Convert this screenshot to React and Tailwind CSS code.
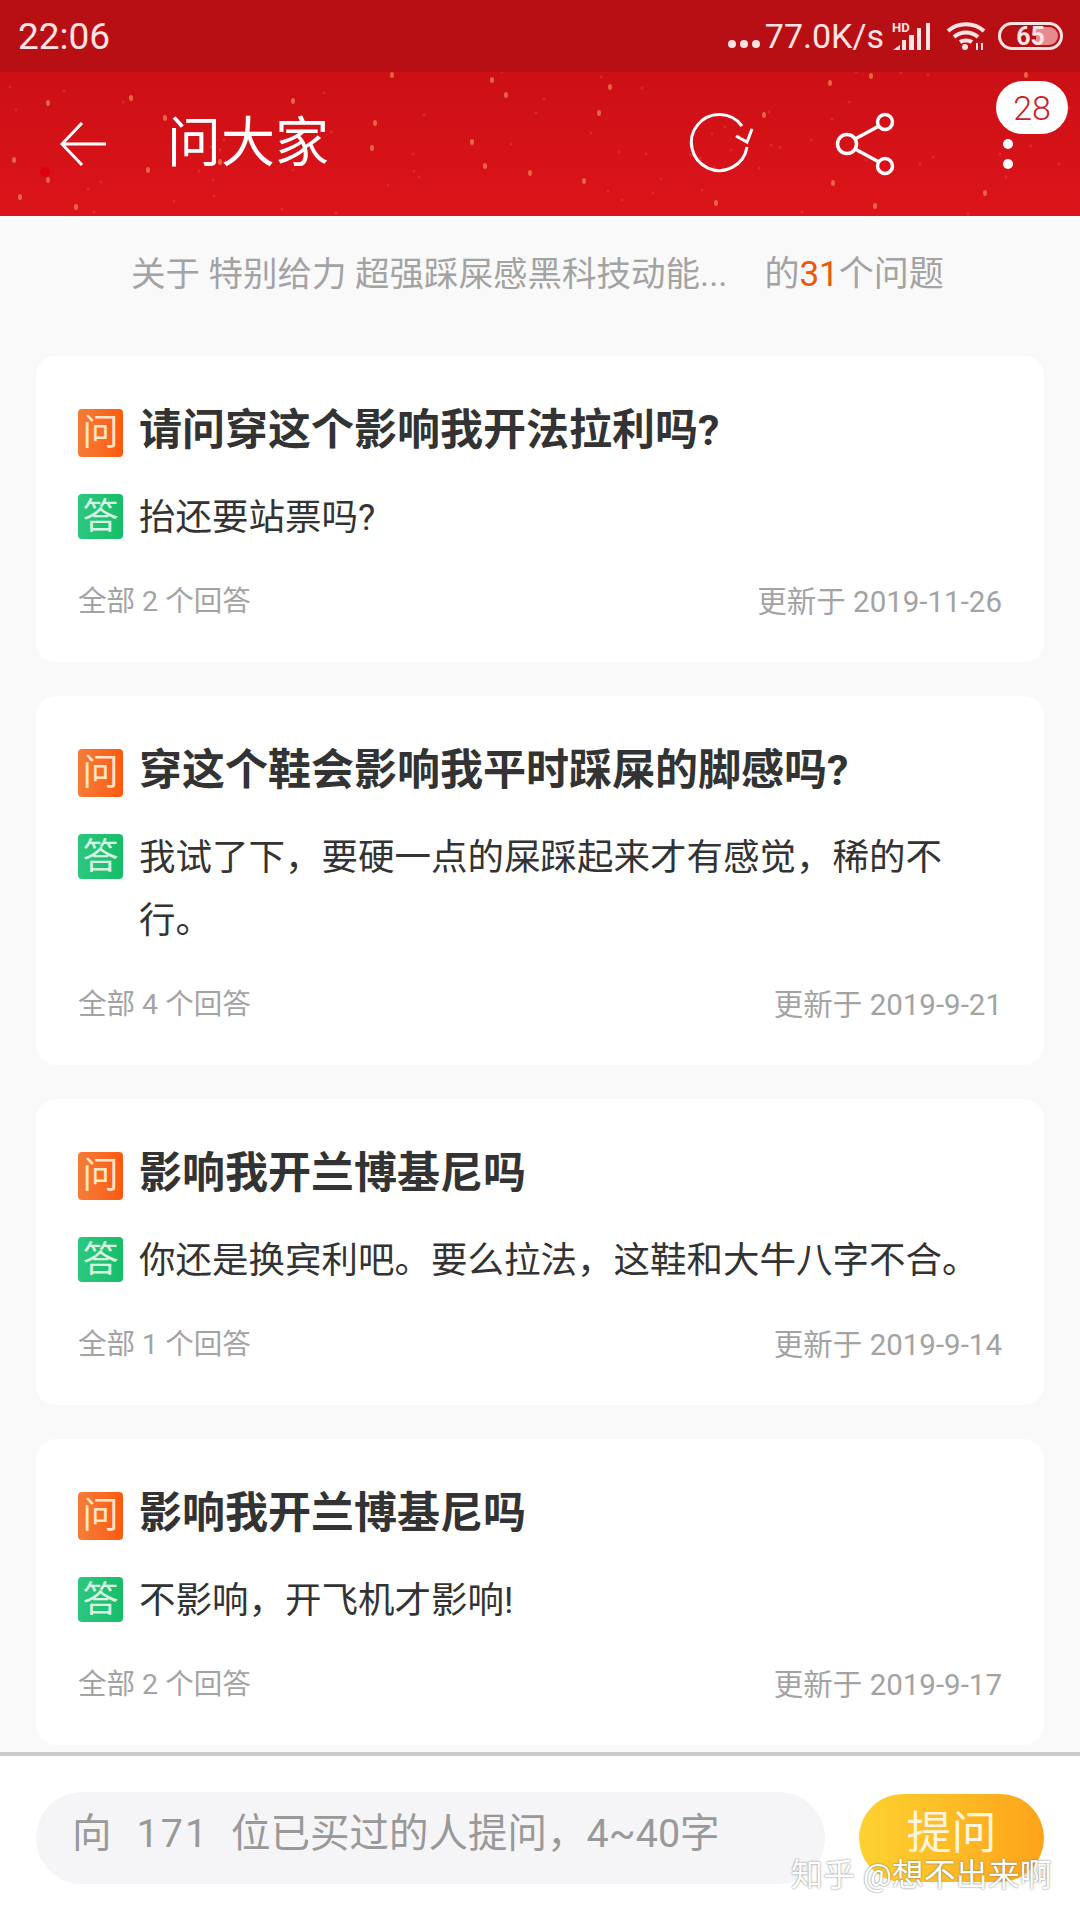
import { useMemo } from "react";

const QUESTIONS = [
    { title: "请问穿这个影响我开法拉利吗?", answer: "抬还要站票吗?", count: "全部 2 个回答", date: "更新于 2019-11-26" },
    { title: "穿这个鞋会影响我平时踩屎的脚感吗?", answer: "我试了下，要硬一点的屎踩起来才有感觉，稀的不行。", count: "全部 4 个回答", date: "更新于 2019-9-21" },
    { title: "影响我开兰博基尼吗", answer: "你还是换宾利吧。要么拉法，这鞋和大牛八字不合。", count: "全部 1 个回答", date: "更新于 2019-9-14" },
    { title: "影响我开兰博基尼吗", answer: "不影响，开飞机才影响!", count: "全部 2 个回答", date: "更新于 2019-9-17" },
];

// Gold flecks on the header, top left of the header is 0,0
const BRIGHT = [
    [392, 3], [492, 8], [506, 23], [830, 11], [1026, 3], [599, 41], [764, 43], [375, 51], [485, 94], [584, 109],
    [833, 111], [875, 134], [48, 31], [131, 26], [293, 29], [165, 46], [48, 108], [148, 98], [220, 90], [530, 101],
    [472, 70], [610, 15], [716, 131], [985, 121], [14, 88], [871, 4], [20, 125], [76, 135], [372, 76],
];

function Flecks() {
    const faint = useMemo(() => {
        const dots = [];
        let seed = 17;
        for (let i = 0; i < 70; i++) {
            seed = (seed * 137 + 71) % 1009;
            const x = (seed * 13) % 1080;
            seed = (seed * 137 + 71) % 1009;
            dots.push([x, seed % 144]);
        }
        return dots;
    }, []);

    return (
        <svg className="absolute inset-0" width="1080" height="144">
            {faint.map(([x, y], i) => <circle key={i} cx={x} cy={y} r="1.5" fill="#e8503a" opacity="0.4" />)}
            {BRIGHT.map(([x, y], i) => <ellipse key={i} cx={x} cy={y} rx="2" ry="3" fill="#ec8a58" opacity="0.7" />)}
            <circle cx="45" cy="100" r="5" fill="#e00012" />
        </svg>
    );
}

function StatusIcons() {
    return (
        <div className="flex items-center">
            <svg width="34" height="12" className="mt-[16px]" fill="#fde3e3">
                <circle cx="5" cy="6" r="4" />
                <circle cx="17" cy="6" r="4" />
                <circle cx="29" cy="6" r="4" />
            </svg>
            <span className="ml-[4px] text-[34px] leading-none text-[#fde3e3]">77.0K/s</span>
            <svg width="40" height="28" className="ml-[8px] overflow-visible" fill="#fde3e3">
                <text x="0" y="10" fontSize="13" fontWeight="700" fontFamily="Roboto, sans-serif">HD</text>
                <path d="M1 28l7-5v5zM10 18h4v10h-4zM17 13h5v15h-5zM25 6h4v22h-4zM34 1h4v27h-4z" />
            </svg>
            <svg width="40" height="30" viewBox="0 0 40 30" className="ml-[14px]" fill="none" stroke="#fde3e3" strokeWidth="4">
                <path d="M2 10c10-9 26-9 36 0" />
                <path d="M8 16c7-6 17-6 24 0" />
                <path d="M14 21c3-2 9-2 12 0" />
                <circle cx="19" cy="26" r="3" fill="#fde3e3" stroke="none" />
                <path d="M31 22v7M36 22v7" strokeWidth="2" />
            </svg>
            <div className="relative ml-[12px] flex h-[28px] w-[65px] items-center justify-center overflow-hidden rounded-full border-[3px] border-[#fde3e3]">
                <div className="absolute inset-y-[2px] right-[2px] w-[22px] rounded-r-full bg-[#e58a8d]" />
                <span className="relative text-[25px] font-bold leading-none text-[#fde3e3]">65</span>
            </div>
        </div>
    );
}

function Tag({ text, className }) {
    return (
        <div className={`flex w-[45px] shrink-0 items-center justify-center rounded-[4px] text-[36px] leading-none ${className}`}>
            {text}
        </div>
    );
}

function QuestionCard({ question }) {
    return (
        <div className="mx-[36px] mb-[34px] rounded-[20px] bg-white pb-[40px] pl-[42px] pr-[42px] pt-[50px]">
            <div className="flex h-[48px] items-start">
                <Tag text="问" className="mt-[3px] h-[48px] bg-linear-to-r from-[#f47c38] to-[#fe590a] text-[#ffe6c8]" />
                <h2 className="ml-[16px] text-[43px] font-bold leading-[48px] text-[#333333]">{question.title}</h2>
            </div>
            <div className="mt-[32px] flex items-start">
                <Tag text="答" className="mt-[8px] h-[45px] bg-linear-to-r from-[#2bc77f] to-[#16bd68] text-[#d8f5e3]" />
                <p className="ml-[16px] text-[36.5px] leading-[63px] text-[#333333]">{question.answer}</p>
            </div>
            <div className="mt-[33px] flex h-[40px] items-center justify-between text-[#a3a3a3]">
                <span className="text-[28.5px]">{question.count}</span>
                <span className="text-[29.5px]">{question.date}</span>
            </div>
        </div>
    );
}

function App() {
    return (
        <div className="flex h-[1920px] w-[1080px] flex-col overflow-hidden bg-[#f9f9f9] font-['Roboto','Noto_Sans_CJK_SC',sans-serif]">
            {/* Status bar */}
            <div className="flex h-[72px] shrink-0 items-center justify-between bg-[#b80f14] pl-[18px] pr-[17px]">
                <span className="text-[37px] leading-none text-[#fde3e3]">22:06</span>
                <StatusIcons />
            </div>

            {/* Header */}
            <div className="relative flex h-[144px] shrink-0 items-center bg-linear-to-b from-[#cc1016] to-[#dc141a] pl-[60px] text-white">
                <Flecks />
                <svg width="46" height="44" viewBox="0 0 46 44" className="relative" fill="none" stroke="white" strokeWidth="3">
                    <path d="M22 1L2 22l20 21M2 22h44" />
                </svg>
                <h1 className="relative ml-[61px] text-[54px] leading-none">问大家</h1>
                <svg width="70" height="70" viewBox="0 0 70 70" className="relative ml-[355px]" fill="none" stroke="white" strokeWidth="3">
                    <path d="M63 38A28 28 0 1 1 58 17" />
                    <path d="M52 27l11 6 5-13" />
                </svg>
                <svg width="64" height="64" viewBox="0 0 64 64" className="relative ml-[80px]" fill="none" stroke="white" strokeWidth="3.5">
                    <circle cx="13" cy="32" r="9.5" />
                    <circle cx="51" cy="10" r="7.5" />
                    <circle cx="51" cy="54" r="7.5" />
                    <path d="M21 27l24-13M21 37l24 13" />
                </svg>
                <div className="absolute left-[996px] top-[9px] flex h-[53px] w-[72px] items-center justify-center rounded-full bg-white text-[34px] font-light leading-none text-[#c8212a]">
                    28
                </div>
                <div className="absolute left-[1003px] top-[67px] flex flex-col gap-[10px]">
                    <div className="h-[10px] w-[10px] rounded-full bg-white" />
                    <div className="h-[10px] w-[10px] rounded-full bg-white" />
                </div>
            </div>

            {/* Question list */}
            <div className="min-h-0 flex-1">
                <div className="flex h-[118px] items-center pl-[131px] text-[34.5px] text-[#a3a3a3]">
                    <span>关于 特别给力 超强踩屎感黑科技动能...</span>
                    <span className="ml-[37px] text-[35px]">的<span className="text-[#e8590c]">31</span>个问题</span>
                </div>
                <div className="mt-[22px]">
                    {QUESTIONS.map((q, i) => <QuestionCard key={i} question={q} />)}
                </div>
            </div>

            {/* Ask bar */}
            <div className="relative flex h-[168px] shrink-0 items-center justify-between border-t-[4px] border-[#cbcbcb] bg-white px-[36px]">
                <div className="flex h-[92px] w-[789px] items-center rounded-[46px] bg-[#f5f5f7] pb-[8px] pl-[36px] text-[39.5px] text-[#999999]">
                    <span>向</span>
                    <span className="ml-[25px] mr-[22px] tracking-[2px]">171</span>
                    <span>位已买过的人提问，4~40字</span>
                </div>
                <div className="flex h-[88px] w-[185px] items-center justify-center rounded-[44px] bg-linear-to-r from-[#fdd230] to-[#fda31a] pb-[8px] text-[45px] text-[#fff5dc]">
                    提问
                </div>
                <span className="absolute left-[791px] top-[103px] text-[32px] leading-none text-white [text-shadow:0_0_2px_#666666]">
                    知乎 @想不出来啊
                </span>
            </div>
        </div>
    );
}

export default App;
